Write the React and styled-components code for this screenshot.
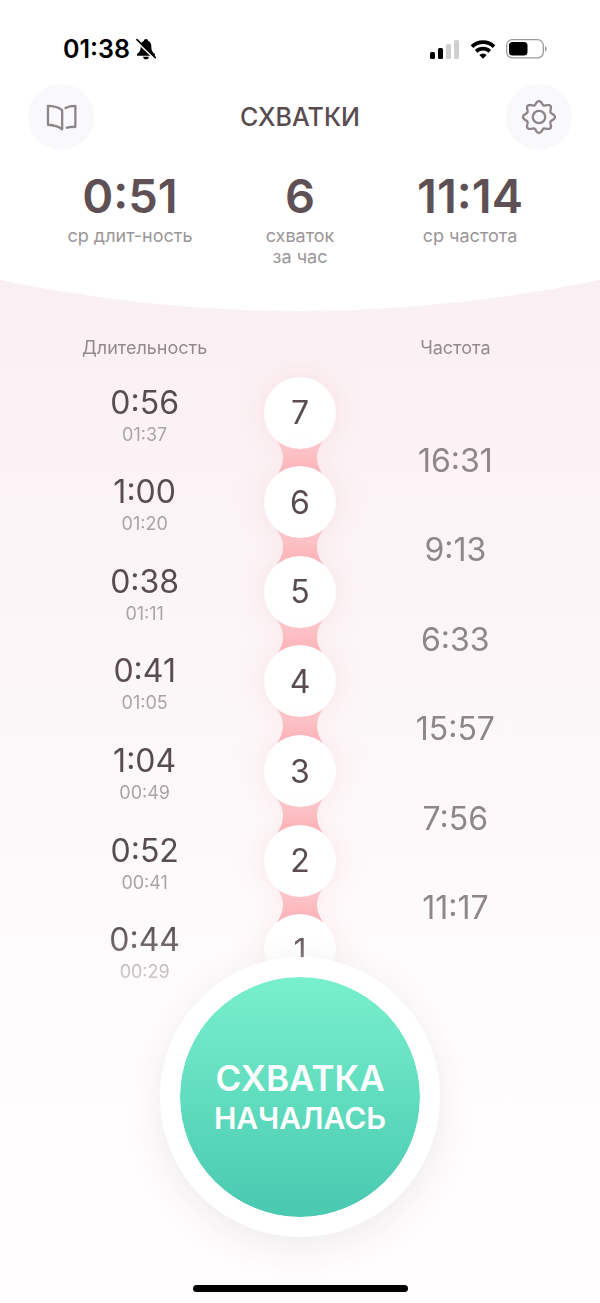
import React from "react";
import styled, { createGlobalStyle } from "styled-components";

const GlobalStyle = createGlobalStyle`
  *, *::before, *::after { box-sizing: border-box; }
  body { margin: 0; background: #fff; }
  button { font: inherit; border: 0; padding: 0; cursor: pointer; }
  h1, h2, p, dl, dd, ol { margin: 0; padding: 0; }
  ol { list-style: none; }
`;

const Page = styled.div`
  display: flex;
  flex-direction: column;
  min-height: 100vh;
  overflow: hidden;
  font-family: Inter, "Liberation Sans", sans-serif;
  color: #584c50;
  background: linear-gradient(#faf0f3 280px, #fbf3f6 480px, #fcf8fa 780px, #fefcfd 1000px, #fffdfe);
`;

const Top = styled.header`
  background: #fff;
  height: 280px;
`;

const StatusBar = styled.div`
  display: flex;
  align-items: center;
  justify-content: space-between;
  height: 84px;
  padding: 14px 53px 0 63px;
  color: #000;
`;

const StatusGroup = styled.div`
  display: flex;
  align-items: center;
  gap: ${(p) => p.$gap}px;
`;

const Clock = styled.time`
  font-size: 25px;
  font-weight: 600;
  line-height: 30px;
`;

const NavBar = styled.nav`
  display: flex;
  align-items: center;
  justify-content: space-between;
  padding: 0 28px;
`;

const RoundButton = styled.button`
  display: flex;
  align-items: center;
  justify-content: center;
  width: 66px;
  height: 66px;
  border-radius: 50%;
  background: #f9f9fc;
  color: #8d8689;
`;

const Title = styled.h1`
  font-size: 25px;
  font-weight: 500;
  line-height: 30px;
`;

const Stats = styled.dl`
  display: grid;
  grid-template-columns: repeat(3, 1fr);
  padding: 17px 45px 0;
  text-align: center;
`;

const Stat = styled.div`
  display: flex;
  flex-direction: column-reverse;
  justify-content: flex-end;
`;

const StatValue = styled.dd`
  font-size: 47px;
  font-weight: 600;
  line-height: 58px;
  color: #5e5055;
`;

const StatLabel = styled.dt`
  font-size: 18px;
  line-height: 21px;
  color: #9b9698;
  white-space: pre-line;
`;

const Curve = styled.svg`
  display: block;
  width: 100%;
  height: 31px;
  flex: none;
`;

const History = styled.main`
  display: grid;
  grid-template-columns: repeat(3, 1fr);
  padding: 26px 67px 0;
  text-align: center;
  mask-image: linear-gradient(#000 612px, rgba(0, 0, 0, 0.5) 100%);
`;

const Column = styled.section`
  display: flex;
  flex-direction: column;
`;

const ColumnTitle = styled.h2`
  height: 31px;
  font-size: 18px;
  font-weight: 400;
  line-height: 21px;
  color: #94898d;
`;

const Rows = styled.ol`
  display: grid;
  grid-auto-rows: 1fr;
  height: ${(p) => (p.$between ? 537 : 627)}px;
  margin-top: ${(p) => (p.$between ? 48 : 0)}px;
`;

const Row = styled.li`
  position: relative;
  display: flex;
  flex-direction: column;
  align-items: center;
  justify-content: center;
  padding-top: ${(p) => (p.$timed ? 4 : 0)}px;
`;

const Duration = styled.span`
  font-size: 32px;
  line-height: 40px;
`;

const StartTime = styled.time`
  font-size: 18px;
  line-height: 24px;
  color: #aaa4a7;
`;

const Interval = styled.span`
  font-size: 32px;
  line-height: 40px;
  color: #8e8689;
`;

const Node = styled.span`
  position: relative;
  z-index: 1;
  display: flex;
  align-items: center;
  justify-content: center;
  width: 72px;
  height: 72px;
  border-radius: 50%;
  background: #fff;
  font-size: 32px;
  box-shadow: 0 0 32px rgba(250, 150, 145, 0.2);
`;

const Link = styled.svg`
  position: absolute;
  top: -17px;
  left: calc(50% - 23px);
  width: 46px;
  height: 34px;
`;

const Footer = styled.footer`
  position: relative;
  z-index: 1;
  display: flex;
  flex-direction: column;
  align-items: center;
  gap: 48px;
  margin-top: -38px;
  padding-bottom: 11px;
`;

const StartButton = styled.button`
  display: flex;
  flex-direction: column;
  align-items: center;
  justify-content: center;
  width: 280px;
  height: 280px;
  border-radius: 50%;
  background: linear-gradient(#79f0cd, #48c9b0) padding-box;
  box-shadow: 0 10px 40px rgba(60, 50, 55, 0.09);
  color: #fff;
  && {
    border: 20px solid #fff;
    padding-top: 2px;
  }
`;

const ButtonLine = styled.span`
  font-size: ${(p) => p.$size}px;
  font-weight: 600;
  line-height: 40px;
`;

const HomeIndicator = styled.div`
  width: 215px;
  height: 7px;
  border-radius: 4px;
  background: #000;
`;

const contractions = [
  { n: 7, duration: "0:56", start: "01:37" },
  { n: 6, duration: "1:00", start: "01:20" },
  { n: 5, duration: "0:38", start: "01:11" },
  { n: 4, duration: "0:41", start: "01:05" },
  { n: 3, duration: "1:04", start: "00:49" },
  { n: 2, duration: "0:52", start: "00:41" },
  { n: 1, duration: "0:44", start: "00:29" },
];

const intervals = ["16:31", "9:13", "6:33", "15:57", "7:56", "11:17"];

const stats = [
  { value: "0:51", label: "ср длит-ность" },
  { value: "6", label: "схваток\nза час" },
  { value: "11:14", label: "ср частота" },
];

const gearPath =
  Array.from({ length: 96 }, (_, i) => {
    const a = (i / 96) * Math.PI * 2;
    const r = 14.2 + 1.8 * Math.cos(8 * a);
    return `${i ? "L" : "M"}${(18 + r * Math.sin(a)).toFixed(2)} ${(18 - r * Math.cos(a)).toFixed(2)}`;
  }).join("") + "Z";

const BellOffIcon = () => (
  <svg width="20" height="22" viewBox="0 0 60 66" aria-hidden="true">
    <path d="M30 3c-4 0-6 3-6 5-8 3-10 10-10 18 0 10-2 15-11 22v5h54v-5c-9-7-11-12-11-22 0-8-2-15-10-18 0-2-2-5-6-5ZM21 56h18c-1 5-4 8-9 8s-8-3-9-8Z" />
    <path d="M0 9 56 63" stroke="#fff" strokeWidth="5" />
    <path d="M3 5 58 59" stroke="#000" strokeWidth="5" strokeLinecap="round" />
  </svg>
);

const SignalIcon = () => (
  <svg width="30" height="19" viewBox="0 0 30 19" aria-hidden="true">
    <rect x="0" y="12" width="5" height="7" rx="1.5" />
    <rect x="8" y="8" width="5" height="11" rx="1.5" />
    <rect x="16" y="4" width="5" height="15" rx="1.5" fill="#cfcfcf" />
    <rect x="24" y="0" width="5" height="19" rx="1.5" fill="#cfcfcf" />
  </svg>
);

const WifiIcon = () => (
  <svg width="26" height="19" viewBox="0 0 26 19" fill="none" stroke="#000" strokeWidth="3.8" aria-hidden="true">
    <path d="M2 6.6a16 16 0 0 1 22 0" />
    <path d="M6.2 11.3a10 10 0 0 1 13.6 0" />
    <path d="M13 18.8 9.3 15.1a5.3 5.3 0 0 1 7.4 0Z" fill="#000" stroke="none" />
  </svg>
);

const BatteryIcon = () => (
  <svg width="41" height="20" viewBox="0 0 41 20" aria-hidden="true">
    <rect x="0.7" y="0.7" width="36.6" height="18.2" rx="5.6" fill="none" stroke="#9b9b9b" strokeWidth="1.3" />
    <rect x="3" y="3" width="18.5" height="13.6" rx="3.6" />
    <path d="M39 7.2c2 .8 2 4.4 0 5.2Z" fill="#8b8b8b" />
  </svg>
);

const BookIcon = () => (
  <svg width="33" height="33" viewBox="0 0 100 100" fill="none" stroke="currentColor" strokeWidth="7" strokeLinecap="round" strokeLinejoin="round" aria-hidden="true">
    <path d="M9 15Q36 15 52 28V86Q36 73 9 72Z" />
    <path d="M62 21Q74 15 92 15V78Q77 78 66 81" />
  </svg>
);

const GearIcon = () => (
  <svg width="36" height="36" viewBox="0 0 36 36" fill="none" stroke="currentColor" strokeWidth="2.3" strokeLinejoin="round" aria-hidden="true">
    <path d={gearPath} />
    <circle cx="18" cy="18" r="6.2" />
  </svg>
);

const Connector = () => (
  <Link viewBox="0 0 46 34" aria-hidden="true">
    <defs>
      <linearGradient id="link-fill" x1="0" y1="0" x2="0" y2="1">
        <stop offset="0.2" stopColor="#fccacf" />
        <stop offset="0.9" stopColor="#fdb7bd" />
      </linearGradient>
    </defs>
    <path d="M0 0Q12 17 0 34H46Q34 17 46 0Z" fill="url(#link-fill)" />
  </Link>
);

export default function App() {
  return (
    <Page>
      <GlobalStyle />
      <Top>
        <StatusBar>
          <StatusGroup $gap={6}>
            <Clock>01:38</Clock>
            <BellOffIcon />
          </StatusGroup>
          <StatusGroup $gap={10}>
            <SignalIcon />
            <WifiIcon />
            <BatteryIcon />
          </StatusGroup>
        </StatusBar>
        <NavBar>
          <RoundButton type="button" aria-label="Журнал">
            <BookIcon />
          </RoundButton>
          <Title>СХВАТКИ</Title>
          <RoundButton type="button" aria-label="Настройки">
            <GearIcon />
          </RoundButton>
        </NavBar>
        <Stats>
          {stats.map((s) => (
            <Stat key={s.label}>
              <StatLabel>{s.label}</StatLabel>
              <StatValue>{s.value}</StatValue>
            </Stat>
          ))}
        </Stats>
      </Top>
      <Curve viewBox="0 0 600 31" preserveAspectRatio="none" aria-hidden="true">
        <path d="M0 0Q300 62 600 0Z" fill="#fff" />
      </Curve>
      <History>
        <Column>
          <ColumnTitle>Длительность</ColumnTitle>
          <Rows>
            {contractions.map((c) => (
              <Row key={c.n} $timed>
                <Duration>{c.duration}</Duration>
                <StartTime>{c.start}</StartTime>
              </Row>
            ))}
          </Rows>
        </Column>
        <Column>
          <ColumnTitle aria-hidden="true" />
          <Rows>
            {contractions.map((c, i) => (
              <Row key={c.n}>
                {i > 0 && <Connector />}
                <Node>{c.n}</Node>
              </Row>
            ))}
          </Rows>
        </Column>
        <Column>
          <ColumnTitle>Частота</ColumnTitle>
          <Rows $between>
            {intervals.map((value) => (
              <Row key={value}>
                <Interval>{value}</Interval>
              </Row>
            ))}
          </Rows>
        </Column>
      </History>
      <Footer>
        <StartButton type="button">
          <ButtonLine $size={35}>СХВАТКА</ButtonLine>
          <ButtonLine $size={30}>НАЧАЛАСЬ</ButtonLine>
        </StartButton>
        <HomeIndicator />
      </Footer>
    </Page>
  );
}
